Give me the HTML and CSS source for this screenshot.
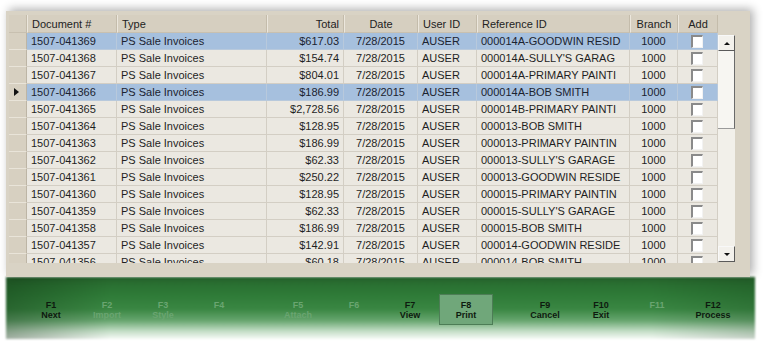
FILE: index.html
```html
<!DOCTYPE html>
<html>
<head>
<meta charset="utf-8">
<link rel="stylesheet" href="styles.css">
</head>
<body>
<div class="window">
  <div class="panel">
    <div class="grid">
      <div class="table">
        <div class="row head">
          <div class="cell rh"></div>
          <div class="cell">Document #</div>
          <div class="cell">Type</div>
          <div class="cell r">Total</div>
          <div class="cell c">Date</div>
          <div class="cell">User ID</div>
          <div class="cell">Reference ID</div>
          <div class="cell c">Branch</div>
          <div class="cell c">Add</div>
        </div>
        <div class="row sel"><div class="cell rh"></div><div class="cell">1507-041369</div><div class="cell">PS Sale Invoices</div><div class="cell r">$617.03</div><div class="cell c">7/28/2015</div><div class="cell">AUSER</div><div class="cell">000014A-GOODWIN RESID</div><div class="cell c">1000</div><div class="cell chk"><span class="box"></span></div></div>
        <div class="row"><div class="cell rh"></div><div class="cell">1507-041368</div><div class="cell">PS Sale Invoices</div><div class="cell r">$154.74</div><div class="cell c">7/28/2015</div><div class="cell">AUSER</div><div class="cell">000014A-SULLY'S GARAG</div><div class="cell c">1000</div><div class="cell chk"><span class="box"></span></div></div>
        <div class="row"><div class="cell rh"></div><div class="cell">1507-041367</div><div class="cell">PS Sale Invoices</div><div class="cell r">$804.01</div><div class="cell c">7/28/2015</div><div class="cell">AUSER</div><div class="cell">000014A-PRIMARY PAINTI</div><div class="cell c">1000</div><div class="cell chk"><span class="box"></span></div></div>
        <div class="row sel"><div class="cell rh"><span class="cur"></span></div><div class="cell">1507-041366</div><div class="cell">PS Sale Invoices</div><div class="cell r">$186.99</div><div class="cell c">7/28/2015</div><div class="cell">AUSER</div><div class="cell">000014A-BOB SMITH</div><div class="cell c">1000</div><div class="cell chk"><span class="box"></span></div></div>
        <div class="row"><div class="cell rh"></div><div class="cell">1507-041365</div><div class="cell">PS Sale Invoices</div><div class="cell r">$2,728.56</div><div class="cell c">7/28/2015</div><div class="cell">AUSER</div><div class="cell">000014B-PRIMARY PAINTI</div><div class="cell c">1000</div><div class="cell chk"><span class="box"></span></div></div>
        <div class="row"><div class="cell rh"></div><div class="cell">1507-041364</div><div class="cell">PS Sale Invoices</div><div class="cell r">$128.95</div><div class="cell c">7/28/2015</div><div class="cell">AUSER</div><div class="cell">000013-BOB SMITH</div><div class="cell c">1000</div><div class="cell chk"><span class="box"></span></div></div>
        <div class="row"><div class="cell rh"></div><div class="cell">1507-041363</div><div class="cell">PS Sale Invoices</div><div class="cell r">$186.99</div><div class="cell c">7/28/2015</div><div class="cell">AUSER</div><div class="cell">000013-PRIMARY PAINTIN</div><div class="cell c">1000</div><div class="cell chk"><span class="box"></span></div></div>
        <div class="row"><div class="cell rh"></div><div class="cell">1507-041362</div><div class="cell">PS Sale Invoices</div><div class="cell r">$62.33</div><div class="cell c">7/28/2015</div><div class="cell">AUSER</div><div class="cell">000013-SULLY'S GARAGE</div><div class="cell c">1000</div><div class="cell chk"><span class="box"></span></div></div>
        <div class="row"><div class="cell rh"></div><div class="cell">1507-041361</div><div class="cell">PS Sale Invoices</div><div class="cell r">$250.22</div><div class="cell c">7/28/2015</div><div class="cell">AUSER</div><div class="cell">000013-GOODWIN RESIDE</div><div class="cell c">1000</div><div class="cell chk"><span class="box"></span></div></div>
        <div class="row"><div class="cell rh"></div><div class="cell">1507-041360</div><div class="cell">PS Sale Invoices</div><div class="cell r">$128.95</div><div class="cell c">7/28/2015</div><div class="cell">AUSER</div><div class="cell">000015-PRIMARY PAINTIN</div><div class="cell c">1000</div><div class="cell chk"><span class="box"></span></div></div>
        <div class="row"><div class="cell rh"></div><div class="cell">1507-041359</div><div class="cell">PS Sale Invoices</div><div class="cell r">$62.33</div><div class="cell c">7/28/2015</div><div class="cell">AUSER</div><div class="cell">000015-SULLY'S GARAGE</div><div class="cell c">1000</div><div class="cell chk"><span class="box"></span></div></div>
        <div class="row"><div class="cell rh"></div><div class="cell">1507-041358</div><div class="cell">PS Sale Invoices</div><div class="cell r">$186.99</div><div class="cell c">7/28/2015</div><div class="cell">AUSER</div><div class="cell">000015-BOB SMITH</div><div class="cell c">1000</div><div class="cell chk"><span class="box"></span></div></div>
        <div class="row"><div class="cell rh"></div><div class="cell">1507-041357</div><div class="cell">PS Sale Invoices</div><div class="cell r">$142.91</div><div class="cell c">7/28/2015</div><div class="cell">AUSER</div><div class="cell">000014-GOODWIN RESIDE</div><div class="cell c">1000</div><div class="cell chk"><span class="box"></span></div></div>
        <div class="row"><div class="cell rh"></div><div class="cell">1507-041356</div><div class="cell">PS Sale Invoices</div><div class="cell r">$60.18</div><div class="cell c">7/28/2015</div><div class="cell">AUSER</div><div class="cell">000014-BOB SMITH</div><div class="cell c">1000</div><div class="cell chk"><span class="box"></span></div></div>
      </div>
      <div class="vscroll">
        <div class="sbtn up"><span class="tri-up"></span></div>
        <div class="thumb"></div>
        <div class="track"></div>
        <div class="sbtn down"><span class="tri-down"></span></div>
      </div>
    </div>
  </div>
  <div class="fkeys">
    <div class="group">
      <div class="fk">F1<br>Next</div>
      <div class="fk off">F2<br>Import</div>
      <div class="fk off">F3<br>Style</div>
      <div class="fk off">F4<br>&nbsp;</div>
    </div>
    <div class="group">
      <div class="fk off">F5<br>Attach</div>
      <div class="fk off">F6<br>&nbsp;</div>
      <div class="fk">F7<br>View</div>
      <div class="fk hot">F8<br>Print</div>
    </div>
    <div class="group">
      <div class="fk">F9<br>Cancel</div>
      <div class="fk">F10<br>Exit</div>
      <div class="fk off">F11<br>&nbsp;</div>
      <div class="fk">F12<br>Process</div>
    </div>
  </div>
</div>
</body>
</html>
```

FILE: styles.css
```css
html, body {
  margin: 0;
  padding: 0;
  background: #ffffff;
}

.window {
  padding-top: 11px;
  width: 765px;
  height: 349px;
  box-sizing: border-box;
  overflow: hidden;
  font-family: "Liberation Sans", Arial, sans-serif;
}

.panel {
  margin-left: 6px;
  width: 744px;
  height: 266px;
  box-sizing: border-box;
  padding: 4px 0 0 3px;
  background: #d9d3c5;
  box-shadow: 3px -2px 9px rgba(0, 0, 0, 0.32);
  position: relative;
  z-index: 1;
}

.grid {
  display: flex;
  width: 726px;
  height: 248px;
  overflow: hidden;
}

.table {
  width: 709px;
  font-size: 11px;
  color: #1f1f1f;
}

.row {
  display: grid;
  grid-template-columns: 18px 90px 150px 77px 74px 59px 153px 48px 40px;
  height: 17px;
}

.cell {
  box-sizing: border-box;
  height: 17px;
  line-height: 16px;
  padding: 0 3px 0 4px;
  white-space: nowrap;
  overflow: hidden;
  background: #ebe8e1;
  border-right: 1px solid #d3cec4;
  border-bottom: 1px solid #d3cec4;
}

.cell.r { text-align: right; padding-right: 4px; }
.cell.c { text-align: center; padding: 0; }

.row.sel .cell {
  background: #a6c0de;
  border-color: #b8c9dc;
  color: #1b2330;
}

.row .cell.rh {
  background: #d7d0c1;
  border-right: 1px solid #bdb5a5;
  border-bottom: 1px solid #e9e4d9;
  padding: 0;
  display: flex;
  align-items: center;
  padding-left: 5px;
}

.row.head {
  height: 18px;
}

.row.head .cell {
  height: 18px;
  line-height: 18px;
  background: #d6cfc0;
  border-left: 1px solid #ece7dd;
  border-right: 1px solid #c4bcab;
  border-bottom: 1px solid #c8c0b0;
  color: #222222;
}

.row.head .cell.rh {
  border-left: none;
}

.cur {
  width: 0;
  height: 0;
  border-top: 4px solid transparent;
  border-bottom: 4px solid transparent;
  border-left: 5px solid #111111;
}

.cell.chk {
  padding: 0;
  display: flex;
  align-items: center;
  justify-content: center;
}

.box {
  width: 12px;
  height: 13px;
  box-sizing: border-box;
  background: #ffffff;
  border-top: 2px solid #8a8a8a;
  border-left: 2px solid #8a8a8a;
  border-right: 1px solid #f2f2f2;
  border-bottom: 1px solid #f2f2f2;
  margin-left: -1px;
}

.vscroll {
  width: 17px;
  padding-top: 18px;
  display: flex;
  flex-direction: column;
  background: #d9d3c5;
}

.sbtn {
  height: 16px;
  box-sizing: border-box;
  background: #f3f1ec;
  border-top: 1px solid #f8f8f8;
  border-left: 1px solid #f8f8f8;
  border-right: 1px solid #5a5a5a;
  border-bottom: 1px solid #5a5a5a;
  display: flex;
  align-items: center;
  justify-content: center;
  flex: none;
}

.sbtn.up { margin-top: 2px; }
.sbtn.down { margin-bottom: 1px; }

.tri-up {
  width: 0;
  height: 0;
  border-left: 3px solid transparent;
  border-right: 3px solid transparent;
  border-bottom: 3px solid #111111;
}

.tri-down {
  width: 0;
  height: 0;
  border-left: 3px solid transparent;
  border-right: 3px solid transparent;
  border-top: 3px solid #111111;
}

.thumb {
  height: 78px;
  flex: none;
  box-sizing: border-box;
  background: #f7f6f2;
  border-right: 1px solid #6a6a6a;
  border-bottom: 1px solid #9a9a9a;
}

.track {
  flex: 1;
  background: #f2f0ea;
}

.fkeys {
  margin-left: 6px;
  width: 749px;
  height: 62px;
  box-sizing: border-box;
  padding: 17px 0 0 18px;
  display: flex;
  gap: 25px;
  position: relative;
  z-index: 0;
}

.fkeys::before {
  content: "";
  position: absolute;
  inset: 0;
  z-index: -1;
  background:
    linear-gradient(to right, rgba(10, 40, 12, 0.35) 0, rgba(10, 40, 12, 0) 14%, rgba(10, 40, 12, 0) 86%, rgba(10, 40, 12, 0.18) 100%),
    linear-gradient(to bottom, #27682e 0%, #2e7a37 28%, #3a8743 52%, #66a56e 70%, #c2ddc5 87%, #f6faf6 100%);
  filter: blur(1.2px);
}

.group {
  display: flex;
  gap: 2px;
}

.fk {
  width: 54px;
  height: 31px;
  box-sizing: border-box;
  display: flex;
  align-items: center;
  justify-content: center;
  text-align: center;
  font-size: 9px;
  font-weight: bold;
  line-height: 10px;
  color: #0e1a0f;
}

.fk.off {
  color: #6aa571;
}

.fk.hot {
  background: #70a77a;
  border: 1px solid #4d7d56;
}
```
